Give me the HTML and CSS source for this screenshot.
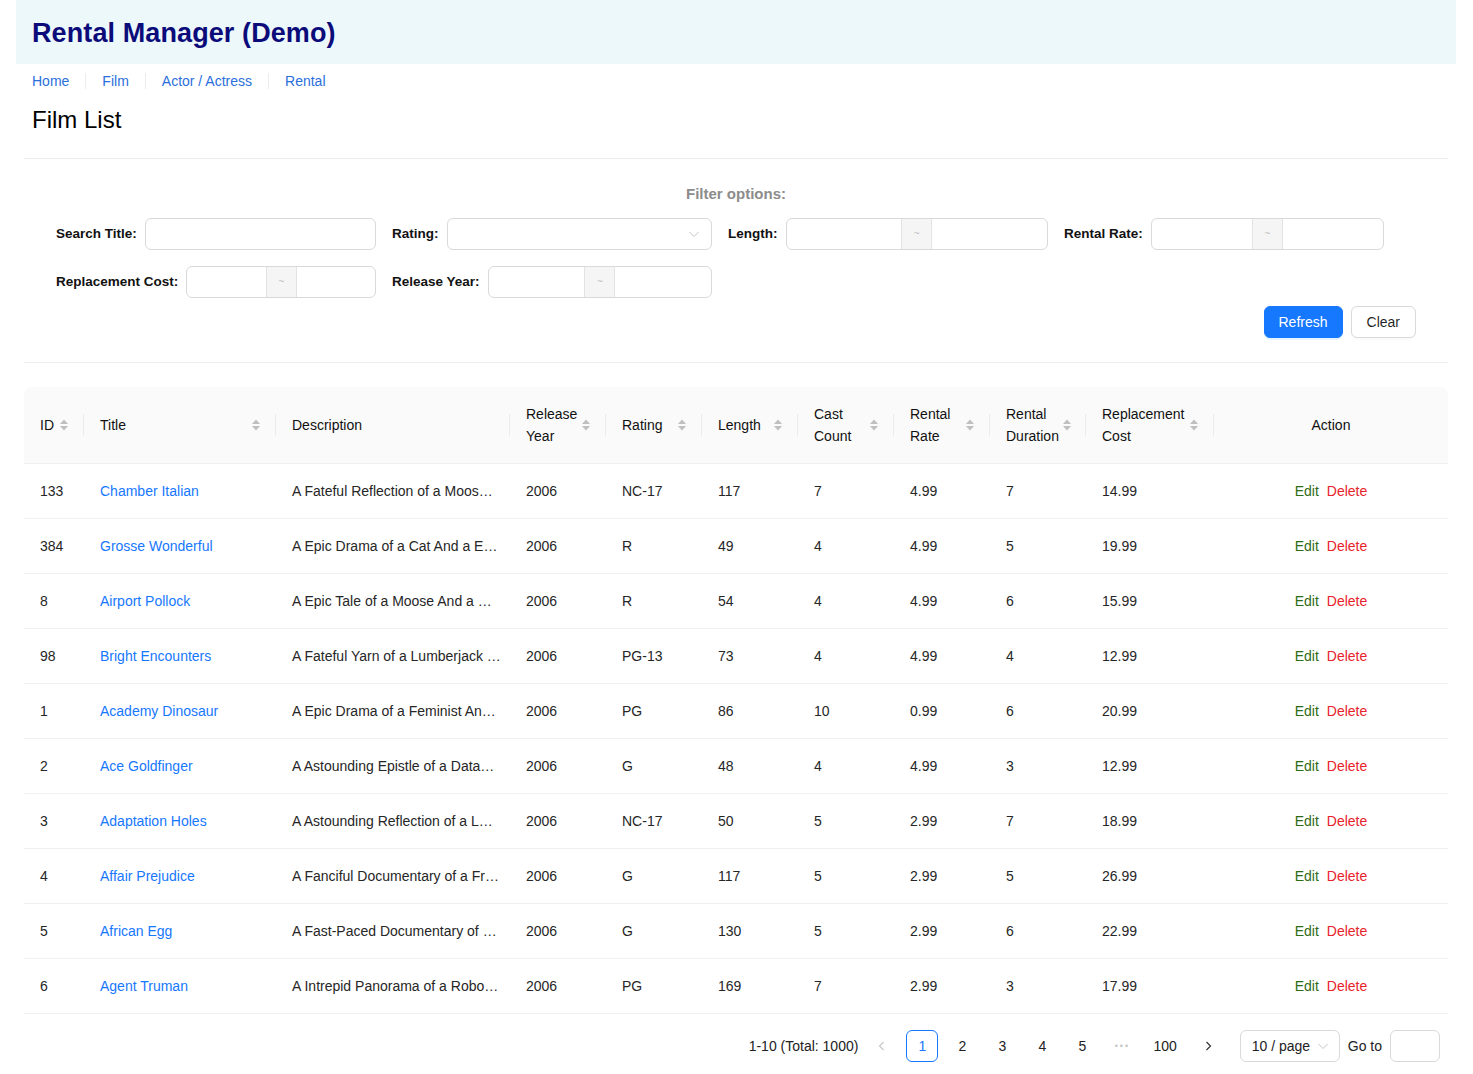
FILE: index.html
```html
<!DOCTYPE html>
<html lang="en">
<head>
<meta charset="utf-8">
<title>Rental Manager (Demo)</title>
<link rel="stylesheet" href="styles.css">
</head>
<body>
<div class="page">
  <header class="app-header">
    <h1 class="app-title">Rental Manager (Demo)</h1>
  </header>
  <nav class="nav">
    <a class="nav-item" href="#">Home</a>
    <a class="nav-item" href="#">Film</a>
    <a class="nav-item" href="#">Actor / Actress</a>
    <a class="nav-item" href="#">Rental</a>
  </nav>
  <main class="content">
    <h2 class="page-title">Film List</h2>
    <div class="divider"></div>

    <section class="filters">
      <div class="filter-heading">Filter options:</div>
      <div class="filter-grid">
        <div class="field">
          <label class="field-label">Search Title:</label>
          <div class="input"></div>
        </div>
        <div class="field">
          <label class="field-label">Rating:</label>
          <div class="input select">
            <svg class="chev" width="12" height="12" viewBox="0 0 12 12"><polyline points="1.5,4 6,8.5 10.5,4" fill="none" stroke="#c4c4c4" stroke-width="1"/></svg>
          </div>
        </div>
        <div class="field">
          <label class="field-label">Length:</label>
          <div class="range"><div class="range-part"></div><div class="range-sep">~</div><div class="range-part"></div></div>
        </div>
        <div class="field">
          <label class="field-label">Rental Rate:</label>
          <div class="range"><div class="range-part"></div><div class="range-sep">~</div><div class="range-part"></div></div>
        </div>
        <div class="field">
          <label class="field-label">Replacement Cost:</label>
          <div class="range"><div class="range-part"></div><div class="range-sep">~</div><div class="range-part"></div></div>
        </div>
        <div class="field">
          <label class="field-label">Release Year:</label>
          <div class="range"><div class="range-part"></div><div class="range-sep">~</div><div class="range-part"></div></div>
        </div>
      </div>
      <div class="filter-actions">
        <button class="btn btn-primary">Refresh</button>
        <button class="btn">Clear</button>
      </div>
    </section>

    <div class="divider divider-b"></div>

    <table class="film-table">
      <colgroup>
        <col style="width:60px"><col style="width:192px"><col style="width:234px"><col style="width:96px"><col style="width:96px"><col style="width:96px"><col style="width:96px"><col style="width:96px"><col style="width:96px"><col style="width:128px"><col style="width:234px">
      </colgroup>
      <thead>
        <tr>
          <th><div class="th-inner"><span class="th-title">ID</span><svg class="sorter" width="8" height="12" viewBox="0 0 8 12"><polygon points="0,5 4,0.5 8,5" fill="#bfbfbf"/><polygon points="0,7 4,11.5 8,7" fill="#bfbfbf"/></svg></div></th>
          <th><div class="th-inner"><span class="th-title">Title</span><svg class="sorter" width="8" height="12" viewBox="0 0 8 12"><polygon points="0,5 4,0.5 8,5" fill="#bfbfbf"/><polygon points="0,7 4,11.5 8,7" fill="#bfbfbf"/></svg></div></th>
          <th><div class="th-inner"><span class="th-title">Description</span></div></th>
          <th><div class="th-inner"><span class="th-title">Release Year</span><svg class="sorter" width="8" height="12" viewBox="0 0 8 12"><polygon points="0,5 4,0.5 8,5" fill="#bfbfbf"/><polygon points="0,7 4,11.5 8,7" fill="#bfbfbf"/></svg></div></th>
          <th><div class="th-inner"><span class="th-title">Rating</span><svg class="sorter" width="8" height="12" viewBox="0 0 8 12"><polygon points="0,5 4,0.5 8,5" fill="#bfbfbf"/><polygon points="0,7 4,11.5 8,7" fill="#bfbfbf"/></svg></div></th>
          <th><div class="th-inner"><span class="th-title">Length</span><svg class="sorter" width="8" height="12" viewBox="0 0 8 12"><polygon points="0,5 4,0.5 8,5" fill="#bfbfbf"/><polygon points="0,7 4,11.5 8,7" fill="#bfbfbf"/></svg></div></th>
          <th><div class="th-inner"><span class="th-title">Cast Count</span><svg class="sorter" width="8" height="12" viewBox="0 0 8 12"><polygon points="0,5 4,0.5 8,5" fill="#bfbfbf"/><polygon points="0,7 4,11.5 8,7" fill="#bfbfbf"/></svg></div></th>
          <th><div class="th-inner"><span class="th-title">Rental Rate</span><svg class="sorter" width="8" height="12" viewBox="0 0 8 12"><polygon points="0,5 4,0.5 8,5" fill="#bfbfbf"/><polygon points="0,7 4,11.5 8,7" fill="#bfbfbf"/></svg></div></th>
          <th><div class="th-inner"><span class="th-title">Rental Duration</span><svg class="sorter" width="8" height="12" viewBox="0 0 8 12"><polygon points="0,5 4,0.5 8,5" fill="#bfbfbf"/><polygon points="0,7 4,11.5 8,7" fill="#bfbfbf"/></svg></div></th>
          <th><div class="th-inner"><span class="th-title">Replacement Cost</span><svg class="sorter" width="8" height="12" viewBox="0 0 8 12"><polygon points="0,5 4,0.5 8,5" fill="#bfbfbf"/><polygon points="0,7 4,11.5 8,7" fill="#bfbfbf"/></svg></div></th>
          <th class="th-action">Action</th>
        </tr>
      </thead>
      <tbody>
        <tr><td>133</td><td><a class="film-link" href="#">Chamber Italian</a></td><td>A Fateful Reflection of a Moos…</td><td>2006</td><td>NC-17</td><td>117</td><td>7</td><td>4.99</td><td>7</td><td>14.99</td><td class="td-action"><a class="act-edit" href="#">Edit</a><a class="act-del" href="#">Delete</a></td></tr>
        <tr><td>384</td><td><a class="film-link" href="#">Grosse Wonderful</a></td><td>A Epic Drama of a Cat And a E…</td><td>2006</td><td>R</td><td>49</td><td>4</td><td>4.99</td><td>5</td><td>19.99</td><td class="td-action"><a class="act-edit" href="#">Edit</a><a class="act-del" href="#">Delete</a></td></tr>
        <tr><td>8</td><td><a class="film-link" href="#">Airport Pollock</a></td><td>A Epic Tale of a Moose And a …</td><td>2006</td><td>R</td><td>54</td><td>4</td><td>4.99</td><td>6</td><td>15.99</td><td class="td-action"><a class="act-edit" href="#">Edit</a><a class="act-del" href="#">Delete</a></td></tr>
        <tr><td>98</td><td><a class="film-link" href="#">Bright Encounters</a></td><td>A Fateful Yarn of a Lumberjack …</td><td>2006</td><td>PG-13</td><td>73</td><td>4</td><td>4.99</td><td>4</td><td>12.99</td><td class="td-action"><a class="act-edit" href="#">Edit</a><a class="act-del" href="#">Delete</a></td></tr>
        <tr><td>1</td><td><a class="film-link" href="#">Academy Dinosaur</a></td><td>A Epic Drama of a Feminist An…</td><td>2006</td><td>PG</td><td>86</td><td>10</td><td>0.99</td><td>6</td><td>20.99</td><td class="td-action"><a class="act-edit" href="#">Edit</a><a class="act-del" href="#">Delete</a></td></tr>
        <tr><td>2</td><td><a class="film-link" href="#">Ace Goldfinger</a></td><td>A Astounding Epistle of a Data…</td><td>2006</td><td>G</td><td>48</td><td>4</td><td>4.99</td><td>3</td><td>12.99</td><td class="td-action"><a class="act-edit" href="#">Edit</a><a class="act-del" href="#">Delete</a></td></tr>
        <tr><td>3</td><td><a class="film-link" href="#">Adaptation Holes</a></td><td>A Astounding Reflection of a L…</td><td>2006</td><td>NC-17</td><td>50</td><td>5</td><td>2.99</td><td>7</td><td>18.99</td><td class="td-action"><a class="act-edit" href="#">Edit</a><a class="act-del" href="#">Delete</a></td></tr>
        <tr><td>4</td><td><a class="film-link" href="#">Affair Prejudice</a></td><td>A Fanciful Documentary of a Fr…</td><td>2006</td><td>G</td><td>117</td><td>5</td><td>2.99</td><td>5</td><td>26.99</td><td class="td-action"><a class="act-edit" href="#">Edit</a><a class="act-del" href="#">Delete</a></td></tr>
        <tr><td>5</td><td><a class="film-link" href="#">African Egg</a></td><td>A Fast-Paced Documentary of …</td><td>2006</td><td>G</td><td>130</td><td>5</td><td>2.99</td><td>6</td><td>22.99</td><td class="td-action"><a class="act-edit" href="#">Edit</a><a class="act-del" href="#">Delete</a></td></tr>
        <tr><td>6</td><td><a class="film-link" href="#">Agent Truman</a></td><td>A Intrepid Panorama of a Robo…</td><td>2006</td><td>PG</td><td>169</td><td>7</td><td>2.99</td><td>3</td><td>17.99</td><td class="td-action"><a class="act-edit" href="#">Edit</a><a class="act-del" href="#">Delete</a></td></tr>
      </tbody>
    </table>

    <div class="pagination">
      <span class="total">1-10 (Total: 1000)</span>
      <span class="pg-item pg-arrow"><svg width="12" height="12" viewBox="0 0 12 12"><polyline points="7.5,2 3.5,6 7.5,10" fill="none" stroke="#c8c8c8" stroke-width="1.2"/></svg></span>
      <span class="pg-item pg-active">1</span>
      <span class="pg-item">2</span>
      <span class="pg-item">3</span>
      <span class="pg-item">4</span>
      <span class="pg-item">5</span>
      <span class="pg-item pg-dots">•••</span>
      <span class="pg-item">100</span>
      <span class="pg-item pg-arrow"><svg width="12" height="12" viewBox="0 0 12 12"><polyline points="4.5,2 8.5,6 4.5,10" fill="none" stroke="#333" stroke-width="1.2"/></svg></span>
      <span class="pg-size">10 / page<svg width="12" height="12" viewBox="0 0 12 12"><polyline points="1.5,4 6,8.5 10.5,4" fill="none" stroke="#c4c4c4" stroke-width="1"/></svg></span>
      <span class="jumper">Go to<span class="jump-input"></span></span>
    </div>
  </main>
</div>
</body>
</html>
```

FILE: styles.css
```css
* { box-sizing: border-box; }

html, body {
  margin: 0;
  padding: 0;
  background: #fff;
}

body {
  font-family: "Liberation Sans", Arial, sans-serif;
  font-size: 14px;
  line-height: 22px;
  color: rgba(0, 0, 0, 0.88);
}

.page {
  padding: 0 17px 0 16px;
}

.app-header {
  height: 64px;
  background: #edf8fb;
  display: flex;
  align-items: center;
  padding-left: 16px;
}

.app-title {
  margin: 2px 0 0 0;
  font-size: 27px;
  font-weight: 700;
  line-height: 34px;
  color: #0b0b7a;
  letter-spacing: 0.1px;
}

.nav {
  display: flex;
  align-items: center;
  margin-top: 6px;
  height: 22px;
}

.nav-item {
  color: #2b6fdc;
  text-decoration: none;
  padding: 0 16px;
  border-left: 1px solid #ececec;
  line-height: 16px;
}

.nav-item:first-child {
  border-left: none;
}

.content {
  padding: 0 8px;
}

.page-title {
  margin: 12px 0 0 8px;
  font-size: 24px;
  font-weight: 400;
  line-height: 32px;
  color: #000;
}

.divider {
  height: 1px;
  background: #ececec;
  margin-top: 22px;
}

.filters {
  padding-top: 23px;
}

.filter-heading {
  text-align: center;
  font-size: 15px;
  font-weight: 700;
  line-height: 24px;
  color: #8c8c8c;
}

.filter-grid {
  margin: 12px 0 0 16px;
  display: grid;
  grid-template-columns: repeat(4, 336px);
  row-gap: 16px;
}

.field {
  display: flex;
  align-items: center;
  padding-left: 16px;
}

.field-label {
  font-weight: 700;
  font-size: 13.5px;
  color: #111;
  margin-right: 8px;
  white-space: nowrap;
}

.input {
  flex: 1;
  height: 32px;
  border: 1px solid #d9d9d9;
  border-radius: 6px;
  background: #fff;
}

.select {
  display: flex;
  align-items: center;
  justify-content: flex-end;
  padding-right: 11px;
}

.range {
  flex: 1;
  height: 32px;
  border: 1px solid #d9d9d9;
  border-radius: 6px;
  display: flex;
  overflow: hidden;
}

.range-part {
  flex: 1;
}

.range-sep {
  width: 31px;
  flex: none;
  background: #f5f5f5;
  border-left: 1px solid #e3e3e3;
  border-right: 1px solid #e3e3e3;
  color: #c0c0c0;
  font-size: 10px;
  display: flex;
  align-items: center;
  justify-content: center;
}

.filter-actions {
  display: flex;
  justify-content: flex-end;
  gap: 8px;
  margin-top: 8px;
  padding-right: 32px;
}

.btn {
  height: 32px;
  padding: 0 15px;
  border: 1px solid #d9d9d9;
  border-radius: 6px;
  background: #fff;
  font-family: inherit;
  font-size: 14px;
  color: rgba(0, 0, 0, 0.88);
  box-shadow: 0 2px 0 rgba(0, 0, 0, 0.02);
}

.btn-primary {
  background: #1677ff;
  border-color: #1677ff;
  color: #fff;
  padding: 0 14px;
  box-shadow: 0 2px 0 rgba(5, 145, 255, 0.1);
}

.divider-b {
  margin-top: 24px;
}

.film-table {
  margin-top: 24px;
  width: 1424px;
  table-layout: fixed;
  border-collapse: separate;
  border-spacing: 0;
}

.film-table th {
  background: #fafafa;
  font-weight: 400;
  color: #111;
  text-align: left;
  padding: 16px;
  border-bottom: 1px solid #f0f0f0;
  position: relative;
}

.film-table th:first-child { border-top-left-radius: 8px; }
.film-table th:last-child { border-top-right-radius: 8px; }

.film-table th:not(:last-child)::before {
  content: "";
  position: absolute;
  right: 0;
  top: 50%;
  width: 1px;
  height: 22px;
  margin-top: -11px;
  background: #ececec;
}

.th-inner {
  display: flex;
  align-items: center;
  gap: 4px;
}

.th-title {
  flex: 1;
}

.sorter {
  flex: none;
}

.th-action {
  text-align: center !important;
}

.film-table td {
  padding: 16px;
  border-bottom: 1px solid #f0f0f0;
  white-space: nowrap;
  overflow: hidden;
  color: #262626;
}

.film-link {
  color: #1677ff;
  text-decoration: none;
}

.td-action {
  text-align: center;
}

.act-edit {
  color: #2f6b16;
  text-decoration: none;
  margin-right: 8px;
}

.act-del {
  color: #e8222b;
  text-decoration: none;
}

.pagination {
  display: flex;
  justify-content: flex-end;
  align-items: center;
  margin-top: 16px;
  height: 32px;
  padding-right: 8px;
  color: #222;
}

.total {
  margin-right: 8px;
}

.pg-item {
  min-width: 32px;
  height: 32px;
  padding: 0 6px;
  margin-right: 8px;
  display: flex;
  align-items: center;
  justify-content: center;
  border-radius: 6px;
  border: 1px solid transparent;
  color: #222;
}

.pg-active {
  border-color: #1677ff;
  color: #1677ff;
}

.pg-dots {
  color: #c4c4c4;
  font-size: 9px;
  letter-spacing: 2px;
}

.pg-size {
  margin-left: 8px;
  width: 100px;
  height: 32px;
  border: 1px solid #d9d9d9;
  border-radius: 6px;
  display: flex;
  align-items: center;
  justify-content: space-between;
  padding: 0 10px 0 11px;
}

.jumper {
  margin-left: 8px;
  display: flex;
  align-items: center;
}

.jump-input {
  width: 50px;
  height: 32px;
  margin-left: 8px;
  border: 1px solid #d9d9d9;
  border-radius: 6px;
}
```
